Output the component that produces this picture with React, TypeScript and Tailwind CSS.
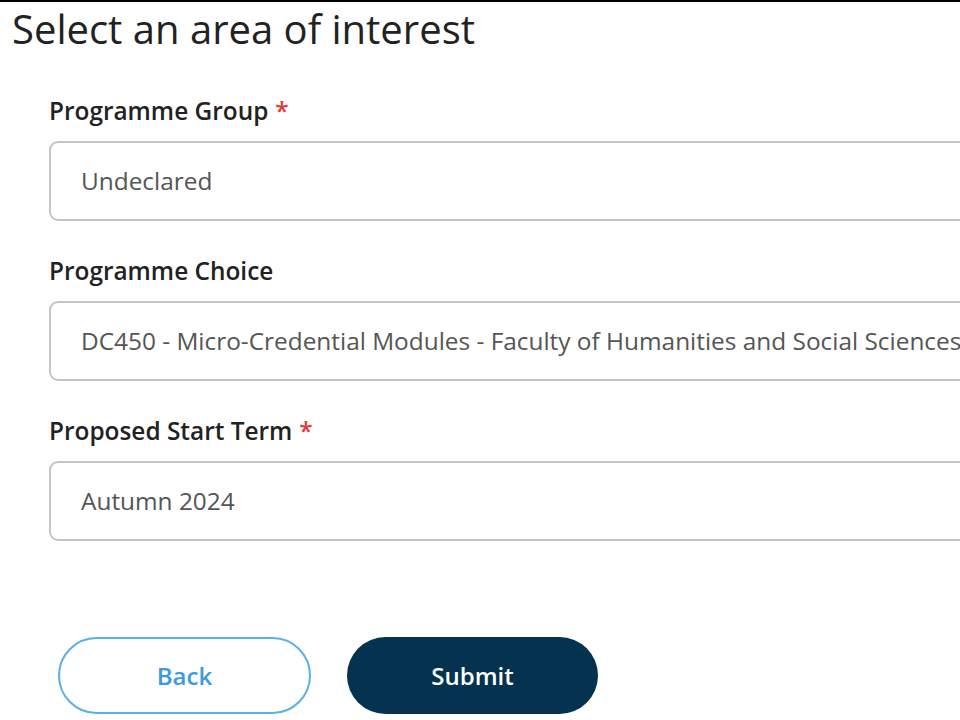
export default function App() {
  const fields = [
    { label: "Programme Group", required: true, value: "Undeclared" },
    {
      label: "Programme Choice",
      required: false,
      value: "DC450 - Micro-Credential Modules - Faculty of Humanities and Social Sciences",
    },
    { label: "Proposed Start Term", required: true, value: "Autumn 2024" },
  ];

  return (
    <div
      className="w-[960px] h-[720px] overflow-hidden bg-white border-t-2 border-black"
      style={{ fontFamily: '"Open Sans", "Noto Sans", sans-serif' }}
    >
      <h1 className="pl-[12px] text-[40px] leading-[54px] text-[#222] font-normal">
        Select an area of interest
      </h1>

      <div className="pl-[49px] pt-[40px] flex flex-col gap-[35px]">
        {fields.map((f) => (
          <div key={f.label} className="flex flex-col">
            <label className="text-[24.4px] leading-[30px] font-semibold text-[#222]">
              {f.label}
              {f.required && <span className="text-[#e53935] ml-[7px]">*</span>}
            </label>
            <div className="mt-[15px] h-[80px] w-[960px] border-2 border-[#c4c4c4] rounded-[9px] flex items-center pl-[30px] whitespace-nowrap overflow-hidden">
              <span className="text-[24.4px] text-[#555]">{f.value}</span>
            </div>
          </div>
        ))}
      </div>

      <div className="pl-[58px] pt-[96px] flex gap-[36px]">
        <button className="w-[253px] h-[77px] rounded-full border-2 border-[#5ab0e6] bg-white text-[#3b9be0] text-[24px] font-semibold">
          Back
        </button>
        <button className="w-[251px] h-[77px] rounded-full bg-[#04324f] text-white text-[24px] font-semibold">
          Submit
        </button>
      </div>
    </div>
  );
}
